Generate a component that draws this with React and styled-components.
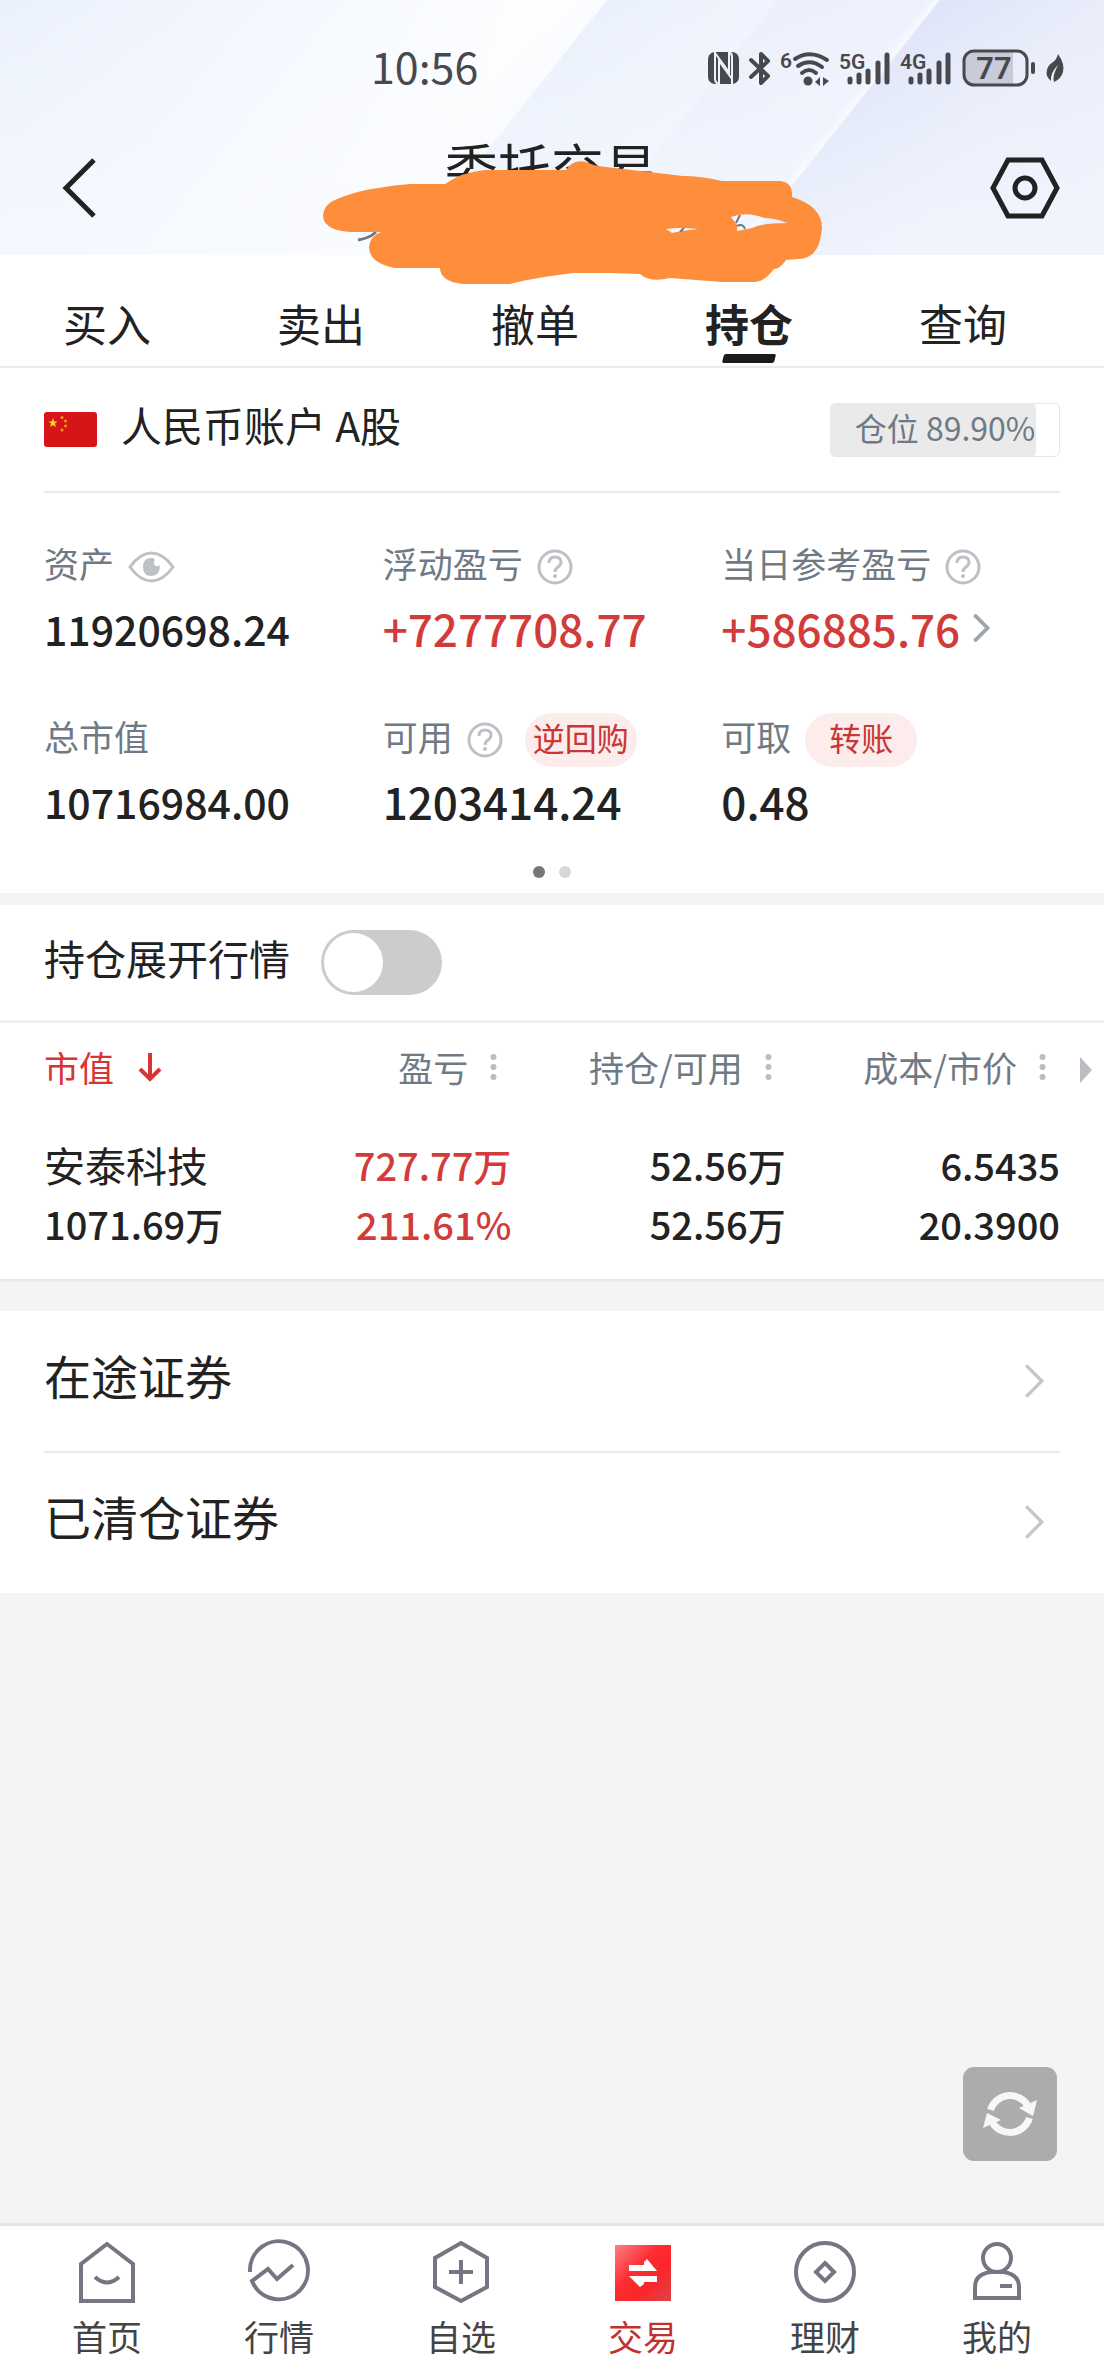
import React, { useState } from 'react';
import styled, { createGlobalStyle } from 'styled-components';

const GlobalStyle = createGlobalStyle`
    * {
        box-sizing: border-box;
    }

    body {
        margin: 0;
        background: #f4f4f4;
        color: #222;
        font-family: "Noto Sans CJK SC", "Noto Sans", sans-serif;
    }

    button {
        margin: 0;
        padding: 0;
        border: 0;
        background: none;
        color: inherit;
        font: inherit;
        cursor: pointer;
    }

    a {
        color: inherit;
        text-decoration: none;
    }

    svg {
        display: block;
        flex: none;
        overflow: visible;
    }
`;

const Page = styled.div`
    display: flex;
    flex-direction: column;
    min-height: 100vh;
`;

const Header = styled.header`
    background:
        linear-gradient(180deg, rgba(248, 250, 255, 0) 0%, rgba(246, 249, 255, 0.6) 100%),
        linear-gradient(
            128.5deg,
            #ebf1fc 0%,
            #f3f7fe 20%,
            #fefefe 42%,
            #fbfcff 46.4%,
            #ebf1fc 46.5%,
            #f0f4fd 59.4%,
            #ecf0fb 59.6%,
            #eff2fd 71%,
            #f8faff 71.8%,
            #dfe5f9 72%,
            #e9edfa 84%,
            #ecf0fb 100%
        );
`;

const StatusBar = styled.div`
    display: flex;
    align-items: center;
    justify-content: space-between;
    height: 120px;
    padding: 16px 40px 0 33.6%;
    color: #48494d;
`;

const Time = styled.span`
    font-size: 43px;
    line-height: 60px;
    padding-bottom: 6px;
`;

const StatusIcons = styled.div`
    display: flex;
    align-items: center;
    gap: 10px;
`;

const NavBar = styled.div`
    position: relative;
    display: flex;
    align-items: center;
    justify-content: space-between;
    height: 135px;
    padding: 0 44px 0 62px;
`;

const BackButton = styled.button`
    width: 50px;
`;

const Title = styled.h1`
    flex: 1;
    margin: 0;
    padding-bottom: 44px;
    text-align: center;
    font-size: 53px;
    font-weight: 400;
    line-height: 60px;
`;

const Scribble = styled.svg`
    position: absolute;
    top: 36px;
    left: calc(50% - 232px);
    z-index: 2;
`;

const Tabs = styled.nav`
    display: flex;
    height: 113px;
    padding-right: 34px;
    background: #fff;
    border-bottom: 2px solid #e9ebeb;
`;

const Tab = styled.button`
    position: relative;
    flex: 1;
    padding-top: 24px;
    font-size: 44px;
    font-weight: ${(props) => (props.$active ? 700 : 400)};
    line-height: 60px;

    &::after {
        content: "";
        display: ${(props) => (props.$active ? 'block' : 'none')};
        position: absolute;
        bottom: 3px;
        left: calc(50% - 26px);
        width: 52px;
        height: 9px;
        background: #1b1b1b;
        border-radius: 2px;
        transform: skewX(-14deg);
    }
`;

const Panel = styled.section`
    padding: 0 44px;
    background: #fff;
`;

const AccountRow = styled.div`
    display: flex;
    align-items: center;
    gap: 24px;
    height: 125px;
    border-bottom: 2px solid #ebebeb;
`;

const RowText = styled.span`
    padding-bottom: 12px;
    font-size: ${(props) => (props.$large ? 47 : 41)}px;
    line-height: 60px;
`;

const Position = styled.div`
    position: relative;
    width: 230px;
    height: 54px;
    margin-left: auto;
    border: 1px solid #e6e6e6;
    border-radius: 5px;
    color: #6f7a84;
    font-size: 32px;
    line-height: 46px;
    text-align: center;
`;

const PositionFill = styled.div`
    position: absolute;
    top: 0;
    bottom: 0;
    left: 0;
    background: #eaeaea;
    border-radius: 4px;
`;

const PositionText = styled.span`
    position: relative;
    white-space: nowrap;
`;

const Summary = styled.div`
    display: grid;
    grid-template-columns: repeat(3, 1fr);
    row-gap: 55px;
    padding-top: 47px;
`;

const Label = styled.div`
    display: flex;
    align-items: center;
    gap: 14px;
    height: 54px;
    color: #6f7a84;
    font-size: 35px;
    line-height: 46px;
    white-space: nowrap;
`;

const LabelText = styled.span`
    padding-bottom: 8px;
`;

const Value = styled.div`
    display: flex;
    align-items: center;
    gap: 12px;
    margin-top: 4px;
    color: ${(props) => (props.$up ? '#d33b3a' : '#222')};
    font-size: ${(props) => (props.$small ? 41 : 44)}px;
    font-weight: 500;
    line-height: 60px;
    white-space: nowrap;
`;

const HelpButton = styled.button`
    margin-right: 8px;
`;

const Pill = styled.button`
    width: 112px;
    height: 54px;
    padding-bottom: 6px;
    border-radius: 27px;
    background: #fceceb;
    color: #c93634;
    font-size: 32px;
    line-height: 46px;
`;

const Pager = styled.div`
    display: flex;
    justify-content: center;
    gap: 14px;
    padding: 35px 0 15px;
`;

const PagerDot = styled.span`
    width: 12px;
    height: 12px;
    border-radius: 50%;
    background: ${(props) => (props.$active ? '#777' : '#d8d8d8')};
`;

const ExpandRow = styled.label`
    display: flex;
    align-items: center;
    gap: 31px;
    height: 118px;
    margin-top: 12px;
    padding: 0 44px;
    background: #fff;
    border-bottom: 3px solid #f0f0f0;
`;

const Switch = styled.input`
    appearance: none;
    width: 121px;
    height: 65px;
    margin: 0;
    padding: 3px;
    border-radius: 33px;
    background: ${(props) => (props.checked ? '#d33b3a' : '#ccc')};

    &::before {
        content: "";
        display: block;
        width: 59px;
        height: 59px;
        margin-left: ${(props) => (props.checked ? 56 : 0)}px;
        border-radius: 50%;
        background: #fff;
    }
`;

const Holdings = styled.section`
    position: relative;
    padding: 0 44px;
    background: #fff;
    border-bottom: 3px solid #e8e9e9;
`;

const Table = styled.table`
    width: 100%;
    table-layout: fixed;
    border-collapse: collapse;
`;

const HeadCell = styled.th`
    width: ${(props) => (props.$first ? 19 : 27)}%;
    height: 88px;
    padding: 0 ${(props) => (props.$first ? 0 : 14)}px 0 0;
    color: ${(props) => (props.$first ? '#d83433' : '#6f7a84')};
    font-size: 35px;
    font-weight: 400;
    line-height: 48px;
    white-space: nowrap;
`;

const SortButton = styled.button`
    display: flex;
    align-items: center;
    gap: 22px;
    margin-left: ${(props) => (props.$first ? '0' : 'auto')};
`;

const Cell = styled.td`
    padding: 24px 0 26px;
    color: ${(props) => (props.$up ? '#d33b3a' : '#222')};
    line-height: 59px;
    text-align: ${(props) => (props.$first ? 'left' : 'right')};
    white-space: nowrap;
`;

const Line = styled.div`
    font-size: ${(props) => (props.$name ? 41 : 38)}px;
    font-weight: ${(props) => (props.$name ? 400 : 500)};
`;

const ScrollHint = styled.svg`
    position: absolute;
    top: 34px;
    right: 12px;
`;

const LinkList = styled.section`
    margin-top: 29px;
    padding: 0 44px 2px;
    background: #fff;
`;

const LinkRow = styled.a`
    display: flex;
    align-items: center;
    justify-content: space-between;
    height: 140px;
    padding-right: 16px;

    & + & {
        border-top: 2px solid #ececec;
    }
`;

const RefreshButton = styled.button`
    position: fixed;
    right: 47px;
    bottom: 215px;
    display: grid;
    place-items: center;
    width: 94px;
    height: 94px;
    border-radius: 11px;
    background: #acacac;
`;

const TabBar = styled.nav`
    position: sticky;
    bottom: 0;
    display: grid;
    grid-template-columns: 162fr repeat(4, 182fr) 162fr;
    margin-top: auto;
    padding: 14px 26px 20px;
    background: #fff;
    border-top: 3px solid #e5e5e5;
`;

const TabLink = styled.a`
    display: flex;
    flex-direction: column;
    align-items: center;
    gap: 12px;
    color: ${(props) => (props.$active ? '#c4302f' : '#444')};
    font-size: 35px;
    line-height: 40px;
`;

const NfcIcon = () => (
    <svg width="31" height="32" viewBox="0 0 31 32">
        <rect width="31" height="32" rx="7" fill="#48494d" />
        <g fill="none" stroke="#eef2fc" strokeWidth="2">
            <path d="M7 0L7 27Q7 30 10 32" />
            <path d="M11 32V9L24 27" />
            <path d="M7 1L21 20V0" />
            <path d="M21 0Q24 1 24 5V32" />
        </g>
    </svg>
);

const BluetoothIcon = () => (
    <svg width="22" height="35" viewBox="0 0 22 35" fill="none" stroke="#48494d" strokeWidth="4" strokeLinejoin="round" strokeLinecap="round">
        <path d="M2 9L19 25L12 32V3L19 10L2 26" />
    </svg>
);

const WifiIcon = () => (
    <svg width="49" height="37" viewBox="0 0 49 37" fill="none" stroke="#48494d" strokeWidth="4" strokeLinecap="round">
        <text x="-1" y="18" fill="#48494d" stroke="none" fontFamily="Roboto, sans-serif" fontWeight="600" fontSize="21">6</text>
        <path d="M14 9Q29 -1 46 10" />
        <path d="M17 16Q29 8 41 17" />
        <path d="M21 23Q28 17 35 23" />
        <circle cx="27" cy="31" r="4.5" fill="#48494d" stroke="none" />
        <path d="M34 32L39 27V36ZM42 27L48 31L42 36Z" fill="#48494d" stroke="none" />
    </svg>
);

const SignalIcon = ({ label }) => (
    <svg width="51" height="35" viewBox="0 0 51 35">
        <text x="-1" y="18" fill="#48494d" fontFamily="Roboto, sans-serif" fontWeight="600" fontSize="21">{label}</text>
        <g stroke="#48494d" strokeWidth="5" strokeLinecap="round">
            <path d="M10 28V31M19 24V31M28 20V31M38 12V31M47 4V31" />
        </g>
    </svg>
);

const BatteryIcon = () => (
    <svg width="74" height="38" viewBox="0 0 74 38">
        <path d="M12 3H51V35H12Q3 35 3 26V12Q3 3 12 3Z" fill="#c9ccd8" />
        <rect x="2" y="2" width="63" height="34" rx="10" fill="none" stroke="#48494d" strokeWidth="3" />
        <path d="M71 15V23" stroke="#48494d" strokeWidth="4" strokeLinecap="round" />
        <text x="32" y="30" textAnchor="middle" fill="#48494d" fontFamily="Roboto, sans-serif" fontWeight="600" fontSize="31">77</text>
    </svg>
);

const LeafIcon = () => (
    <svg width="18" height="30" viewBox="0 0 18 30">
        <path d="M12 1Q19 11 17 19Q15 26 8 29Q6 23 12 12Q4 20 5 28Q-1 23 1 17Q2 12 7 9Q11 6 12 1Z" fill="#48494d" />
    </svg>
);

const Chevron = ({ color, width, height, stroke }) => (
    <svg width={width} height={height} viewBox="0 0 18 32" fill="none" stroke={color} strokeWidth={stroke}>
        <path d="M2 2L16 16L2 30" />
    </svg>
);

const HelpIcon = () => (
    <svg width="36" height="36" viewBox="0 0 36 36" fill="none" stroke="#bdc1c6" strokeWidth="3">
        <circle cx="18" cy="18" r="16" />
        <path d="M12 14Q12 8 18 8Q24 8 24 13Q24 16 21 18Q18 20 18 23" />
        <circle cx="18" cy="27" r="2" fill="#bdc1c6" stroke="none" />
    </svg>
);

const EyeIcon = () => (
    <svg width="47" height="32" viewBox="0 0 47 32">
        <path d="M2 16Q12 2 23.500 2T45 16Q35 30 23.500 30T2 16Z" fill="none" stroke="#bcc1c7" strokeWidth="3" />
        <path d="M25 7Q15 6 15 16Q15 25 23.500 25Q32 25 32 14Q28 17 26 13Q25 11 27 9Z" fill="#bcc1c7" />
    </svg>
);

const FlagIcon = () => (
    <svg width="53" height="35" viewBox="0 0 53 35">
        <rect width="53" height="35" rx="3" fill="#d61518" />
        <path d="M9 6L10.200 9.400H13.500L10.900 11.500L11.900 15L9 12.900L6.100 15L7.100 11.500L4.500 9.400H7.800Z" fill="#fbdc1c" />
        <g fill="#f19a1b">
            <circle cx="18" cy="5.500" r="1.500" />
            <circle cx="21.500" cy="9" r="1.500" />
            <circle cx="21.500" cy="14" r="1.500" />
            <circle cx="18" cy="18" r="1.500" />
        </g>
    </svg>
);

const MoreDots = () => (
    <svg width="7" height="28" viewBox="0 0 7 28" fill="#b9bec5">
        <circle cx="3.500" cy="4" r="3" />
        <circle cx="3.500" cy="14" r="3" />
        <circle cx="3.500" cy="24" r="3" />
    </svg>
);

const ArrowDown = () => (
    <svg width="28" height="30" viewBox="0 0 28 30" fill="none" stroke="#d83433" strokeWidth="4">
        <path d="M14 1V27M4 17L14 27L24 17" />
    </svg>
);

const tabIcons = {
    home: (
        <path d="M32 4L58 24V61H6V24ZM20 37Q32 48 44 37" />
    ),
    market: (
        <path d="M3 32A29 29 0 1 1 5 41L21 29L30 39L46 25" />
    ),
    watch: (
        <path d="M32 3L58 18V47L32 61L6 47V18ZM32 20V44M20 32H44" />
    ),
    wealth: (
        <>
            <circle cx="32" cy="32" r="29" />
            <path d="M32 23L41 32L32 41L23 32Z" />
        </>
    ),
    mine: (
        <>
            <ellipse cx="32" cy="18" rx="14" ry="14" />
            <path d="M26 32H38Q54 34 54 47V58H10V47Q10 34 26 32M35 46H47" />
        </>
    ),
};

const TradeIcon = () => (
    <svg width="64" height="64" viewBox="0 0 64 64">
        <defs>
            <linearGradient id="trade" x1="0" y1="0" x2="1" y2="1">
                <stop offset="0" stopColor="#ff8085" />
                <stop offset="0.4" stopColor="#fc2d33" />
                <stop offset="0.65" stopColor="#fb252a" />
                <stop offset="1" stopColor="#dc4548" />
            </linearGradient>
        </defs>
        <rect x="4" y="5" width="56" height="56" fill="url(#trade)" />
        <path d="M18 25H33V22L36 19L46 31H18ZM18 36H46V42H33V44L29 47Z" fill="#fff" />
    </svg>
);

const summary = [
    { label: '资产', value: '11920698.24', small: true, eye: true },
    { label: '浮动盈亏', value: '+7277708.77', up: true, help: true },
    { label: '当日参考盈亏', value: '+586885.76', up: true, help: true, more: true },
    { label: '总市值', value: '10716984.00', small: true },
    { label: '可用', value: '1203414.24', help: true, action: '逆回购' },
    { label: '可取', value: '0.48', action: '转账' },
];

const columns = ['市值', '盈亏', '持仓/可用', '成本/市价'];

const holdings = [
    {
        name: '安泰科技',
        marketValue: '1071.69万',
        profit: ['727.77万', '211.61%'],
        amount: ['52.56万', '52.56万'],
        price: ['6.5435', '20.3900'],
    },
];

const bottomTabs = [
    { icon: 'home', label: '首页' },
    { icon: 'market', label: '行情' },
    { icon: 'watch', label: '自选' },
    { icon: 'trade', label: '交易' },
    { icon: 'wealth', label: '理财' },
    { icon: 'mine', label: '我的' },
];

const App = () => {
    const [activeTab, setActiveTab] = useState('持仓');
    const [expanded, setExpanded] = useState(false);
    const position = 89.9;

    return (
        <Page>
            <GlobalStyle />
            <Header>
                <StatusBar>
                    <Time>10:56</Time>
                    <StatusIcons>
                        <NfcIcon />
                        <BluetoothIcon />
                        <WifiIcon />
                        <SignalIcon label="5G" />
                        <SignalIcon label="4G" />
                        <BatteryIcon />
                        <LeafIcon />
                    </StatusIcons>
                </StatusBar>
                <NavBar>
                    <BackButton aria-label="返回">
                        <svg width="34" height="60" viewBox="0 0 34 60" fill="none" stroke="#222" strokeWidth="5">
                            <path d="M32 2L4 30L32 58" />
                        </svg>
                    </BackButton>
                    <Title>委托交易</Title>
                    <button aria-label="设置">
                        <svg width="70" height="62" viewBox="0 0 70 62" fill="none" stroke="#222" strokeWidth="5">
                            <path d="M18 3H52L67 31L52 59H18L3 31Z" />
                            <circle cx="35" cy="31" r="10" />
                        </svg>
                    </button>
                    {/* marker strokes over the account line */}
                    <Scribble width="510" height="134" viewBox="320 156 510 134">
                        <path d="M358 240Q370 238 376 232" fill="none" stroke="#6f7a84" strokeWidth="3" />
                        <path
                            fill="#ff8e3c"
                            fillRule="evenodd"
                            d="M323 215Q324 204 337 199Q356 191 378 188Q395 185 410 184H445Q462 172 485 170H566Q573 159 586 162Q594 166 606 167L683 176Q700 176 722 181H780Q793 182 792 197Q822 206 822 228Q820 243 818 246Q812 259 798 259L786 260Q780 269 774 269Q764 282 755 282H722L670 278Q650 283 640 274L610 273H573L544 277Q520 281 510 284H462Q440 281 440 268H395Q369 263 369 247Q370 236 381 232H350Q323 230 323 215ZM731 217Q746 211 764 218Q775 218 787 223Q762 223 752 228L737 231V225ZM666 229Q680 227 698 229Q680 231 672 233Z"
                        />
                        <path d="M740 215L736 223M737 226Q743 223 745 229M684 228L680 232" fill="none" stroke="#6f7a84" strokeWidth="2" />
                    </Scribble>
                </NavBar>
            </Header>

            <Tabs>
                {['买入', '卖出', '撤单', '持仓', '查询'].map((tab) => (
                    <Tab key={tab} $active={tab === activeTab} onClick={() => setActiveTab(tab)}>
                        {tab}
                    </Tab>
                ))}
            </Tabs>

            <Panel>
                <AccountRow>
                    <FlagIcon />
                    <RowText>人民币账户 A股</RowText>
                    <Position>
                        <PositionFill style={{ width: `${position}%` }} />
                        <PositionText>仓位 {position.toFixed(2)}%</PositionText>
                    </Position>
                </AccountRow>
                <Summary>
                    {summary.map((item) => (
                        <div key={item.label}>
                            <Label>
                                <LabelText>{item.label}</LabelText>
                                {item.eye && <button aria-label="隐藏金额"><EyeIcon /></button>}
                                {item.help && <HelpButton aria-label="说明"><HelpIcon /></HelpButton>}
                                {item.action && <Pill>{item.action}</Pill>}
                            </Label>
                            <Value $up={item.up} $small={item.small}>
                                {item.value}
                                {item.more && <Chevron color="#9da5ad" width={18} height={30} stroke={4} />}
                            </Value>
                        </div>
                    ))}
                </Summary>
                <Pager>
                    <PagerDot $active />
                    <PagerDot />
                </Pager>
            </Panel>

            <ExpandRow>
                <RowText>持仓展开行情</RowText>
                <Switch
                    type="checkbox"
                    role="switch"
                    checked={expanded}
                    onChange={(e) => setExpanded(e.target.checked)}
                />
            </ExpandRow>

            <Holdings>
                <Table>
                    <thead>
                        <tr>
                            {columns.map((column, index) => (
                                <HeadCell key={column} $first={index === 0}>
                                    <SortButton $first={index === 0}>
                                        <span>{column}</span>
                                        {index === 0 ? <ArrowDown /> : <MoreDots />}
                                    </SortButton>
                                </HeadCell>
                            ))}
                        </tr>
                    </thead>
                    <tbody>
                        {holdings.map((item) => (
                            <tr key={item.name}>
                                <Cell $first>
                                    <Line $name>{item.name}</Line>
                                    <Line>{item.marketValue}</Line>
                                </Cell>
                                <Cell $up>
                                    {item.profit.map((text, i) => <Line key={i}>{text}</Line>)}
                                </Cell>
                                <Cell>
                                    {item.amount.map((text, i) => <Line key={i}>{text}</Line>)}
                                </Cell>
                                <Cell>
                                    {item.price.map((text, i) => <Line key={i}>{text}</Line>)}
                                </Cell>
                            </tr>
                        ))}
                    </tbody>
                </Table>
                <ScrollHint width="12" height="26" viewBox="0 0 12 26">
                    <path d="M0 0L12 13L0 26Z" fill="#b9bec5" />
                </ScrollHint>
            </Holdings>

            <LinkList>
                {['在途证券', '已清仓证券'].map((text) => (
                    <LinkRow key={text} href="#">
                        <RowText $large>{text}</RowText>
                        <Chevron color="#c4c6c9" width={20} height={36} stroke={3} />
                    </LinkRow>
                ))}
            </LinkList>

            <RefreshButton aria-label="刷新">
                <svg width="56" height="52" viewBox="0 0 56 52">
                    <g fill="none" stroke="#f7f7f7" strokeWidth="7">
                        <path d="M8.500 22A20.500 20.500 0 0 1 46 18" />
                        <path d="M47.500 30A20.500 20.500 0 0 1 10 34" />
                    </g>
                    <path d="M55 12L51 28L37 20ZM1 40L5 25L19 32Z" fill="#f7f7f7" />
                </svg>
            </RefreshButton>

            <TabBar>
                {bottomTabs.map((tab) => (
                    <TabLink key={tab.icon} href="#" $active={tab.icon === 'trade'}>
                        {tab.icon === 'trade' ? (
                            <TradeIcon />
                        ) : (
                            <svg width="64" height="64" viewBox="0 0 64 64" fill="none" stroke="#757682" strokeWidth="4">
                                {tabIcons[tab.icon]}
                            </svg>
                        )}
                        {tab.label}
                    </TabLink>
                ))}
            </TabBar>
        </Page>
    );
};

export default App;
